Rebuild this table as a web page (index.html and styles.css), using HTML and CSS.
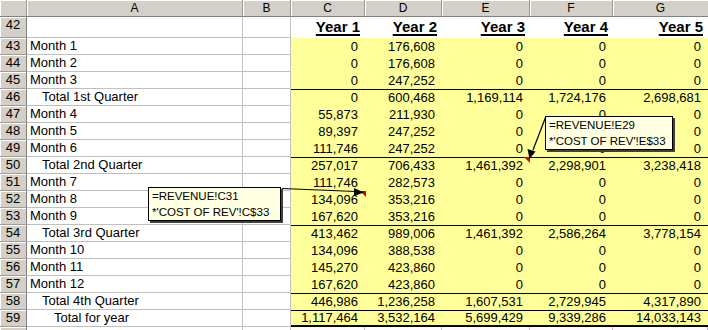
FILE: index.html
```html
<!DOCTYPE html>
<html>
<head>
<meta charset="utf-8">
<link rel="stylesheet" href="styles.css">
</head>
<body>
<div class="sheet">
  <div class="grid">
    <div class="hd corner"></div><div class="hd">A</div><div class="hd">B</div><div class="hd">C</div><div class="hd">D</div><div class="hd">E</div><div class="hd">F</div><div class="hd last">G</div>

    <div class="rh">42</div><div class="c"></div><div class="c"></div><div class="yr"><span>Year 1</span></div><div class="yr"><span>Year 2</span></div><div class="yr"><span>Year 3</span></div><div class="yr"><span>Year 4</span></div><div class="yr"><span>Year 5</span></div>

    <div class="rh">43</div><div class="c">Month 1</div><div class="c"></div><div class="y">0</div><div class="y">176,608</div><div class="y">0</div><div class="y">0</div><div class="y">0</div>
    <div class="rh">44</div><div class="c">Month 2</div><div class="c"></div><div class="y">0</div><div class="y">176,608</div><div class="y">0</div><div class="y">0</div><div class="y">0</div>
    <div class="rh">45</div><div class="c">Month 3</div><div class="c"></div><div class="y">0</div><div class="y">247,252</div><div class="y">0</div><div class="y">0</div><div class="y">0</div>
    <div class="rh">46</div><div class="c i1">Total 1st Quarter</div><div class="c"></div><div class="y t">0</div><div class="y t">600,468</div><div class="y t">1,169,114</div><div class="y t">1,724,176</div><div class="y t">2,698,681</div>
    <div class="rh">47</div><div class="c">Month 4</div><div class="c"></div><div class="y">55,873</div><div class="y">211,930</div><div class="y">0</div><div class="y">0</div><div class="y">0</div>
    <div class="rh">48</div><div class="c">Month 5</div><div class="c"></div><div class="y">89,397</div><div class="y">247,252</div><div class="y">0</div><div class="y">0</div><div class="y">0</div>
    <div class="rh">49</div><div class="c">Month 6</div><div class="c"></div><div class="y">111,746</div><div class="y">247,252</div><div class="y">0</div><div class="y">0</div><div class="y">0</div>
    <div class="rh">50</div><div class="c i1">Total 2nd Quarter</div><div class="c"></div><div class="y t">257,017</div><div class="y t">706,433</div><div class="y t">1,461,392</div><div class="y t">2,298,901</div><div class="y t">3,238,418</div>
    <div class="rh">51</div><div class="c">Month 7</div><div class="c"></div><div class="y">111,746</div><div class="y">282,573</div><div class="y">0</div><div class="y">0</div><div class="y">0</div>
    <div class="rh">52</div><div class="c">Month 8</div><div class="c"></div><div class="y">134,096</div><div class="y">353,216</div><div class="y">0</div><div class="y">0</div><div class="y">0</div>
    <div class="rh">53</div><div class="c">Month 9</div><div class="c"></div><div class="y">167,620</div><div class="y">353,216</div><div class="y">0</div><div class="y">0</div><div class="y">0</div>
    <div class="rh">54</div><div class="c i1">Total 3rd Quarter</div><div class="c"></div><div class="y t">413,462</div><div class="y t">989,006</div><div class="y t">1,461,392</div><div class="y t">2,586,264</div><div class="y t">3,778,154</div>
    <div class="rh">55</div><div class="c">Month 10</div><div class="c"></div><div class="y">134,096</div><div class="y">388,538</div><div class="y">0</div><div class="y">0</div><div class="y">0</div>
    <div class="rh">56</div><div class="c">Month 11</div><div class="c"></div><div class="y">145,270</div><div class="y">423,860</div><div class="y">0</div><div class="y">0</div><div class="y">0</div>
    <div class="rh">57</div><div class="c">Month 12</div><div class="c"></div><div class="y">167,620</div><div class="y">423,860</div><div class="y">0</div><div class="y">0</div><div class="y">0</div>
    <div class="rh">58</div><div class="c i1">Total 4th Quarter</div><div class="c"></div><div class="y t">446,986</div><div class="y t">1,236,258</div><div class="y t">1,607,531</div><div class="y t">2,729,945</div><div class="y t">4,317,890</div>
    <div class="rh">59</div><div class="c i2">Total for year</div><div class="c"></div><div class="y t tb">1,117,464</div><div class="y t tb">3,532,164</div><div class="y t tb">5,699,429</div><div class="y t tb">9,339,286</div><div class="y t tb">14,033,143</div>
    <div class="rh"></div><div class="c"></div><div class="c"></div><div class="c"></div><div class="c"></div><div class="c"></div><div class="c"></div><div class="c"></div>
  </div>

  <svg class="arrows" width="708" height="330" viewBox="0 0 708 330">
    <polygon points="360,191 366,191 366,197" fill="#e00000"/>
    <polygon points="524,157 530,157 530,163" fill="#e00000"/>
    <line x1="282" y1="188.5" x2="356" y2="191.5" stroke="#000" stroke-width="1.2"/>
    <polygon points="364,192.5 354,188 354,196" fill="#000"/>
    <line x1="545.5" y1="117.5" x2="533" y2="150" stroke="#000" stroke-width="1.2"/>
    <polygon points="529.5,159 527.5,149 535.5,151.5" fill="#000"/>
  </svg>

  <div class="note note1">=REVENUE!C31<br>*'COST OF REV'!C$33</div>
  <div class="note note2">=REVENUE!E29<br>*'COST OF REV'!E$33</div>
</div>
</body>
</html>
```
FILE: styles.css
```css
html, body {
  margin: 0;
  padding: 0;
  background: #fff;
}
body {
  width: 708px;
  height: 330px;
  overflow: hidden;
  font-family: "Liberation Sans", Arial, sans-serif;
  color: #000;
}
.sheet {
  position: relative;
  width: 708px;
  height: 330px;
  overflow: hidden;
}
.grid {
  display: grid;
  grid-template-columns: 27px 216px 48px 74px 77px 88px 83px 95px;
  grid-template-rows: 17px 21px repeat(18, 17px);
}
.grid > div {
  box-sizing: border-box;
  white-space: nowrap;
  overflow: hidden;
}
.hd {
  background: #d4d0c8;
  border-right: 1px solid #a09c94;
  border-bottom: 1px solid #808080;
  box-shadow: inset 1px 1px 0 #fff;
  font-size: 12px;
  line-height: 16px;
  text-align: center;
}
.hd.last { border-right: none; }
.rh {
  background: #d4d0c8;
  border-right: 1px solid #808080;
  border-bottom: 1px solid #a09c94;
  box-shadow: inset 1px 1px 0 #fff;
  font-size: 13px;
  line-height: 16px;
  text-align: center;
}
.c {
  border-right: 1px solid #c0c0c0;
  border-bottom: 1px solid #c0c0c0;
  font-size: 13px;
  line-height: 16px;
  padding-left: 3px;
}
.i1 { padding-left: 15px; }
.i2 { padding-left: 27px; }
.yr {
  background: #fff;
  text-align: right;
  padding-right: 5px;
  font-size: 15px;
  font-weight: bold;
  line-height: 20px;
}
.yr span {
  text-decoration: underline;
  text-decoration-thickness: 2px;
  text-underline-offset: 2px;
}
.y {
  background: #ffff99;
  text-align: right;
  padding-right: 7px;
  font-size: 13px;
  line-height: 17px;
}
.t {
  border-top: 1px solid #000;
  line-height: 16px;
}
.tb {
  border-bottom: 2px solid #000;
  line-height: 14px;
}
.arrows {
  position: absolute;
  left: 0;
  top: 0;
  pointer-events: none;
}
.note {
  position: absolute;
  box-sizing: border-box;
  background: #ffffe1;
  border: 1px solid #000;
  box-shadow: 2px 2px 0 #404040;
  font-family: "Liberation Sans", Arial, sans-serif;
  font-size: 11.5px;
  line-height: 16px;
  padding: 0 3px;
  white-space: nowrap;
  overflow: hidden;
}
.note1 {
  left: 148px;
  top: 187px;
  width: 133px;
  height: 34px;
}
.note2 {
  left: 545px;
  top: 116px;
  width: 128px;
  height: 34px;
}
```
